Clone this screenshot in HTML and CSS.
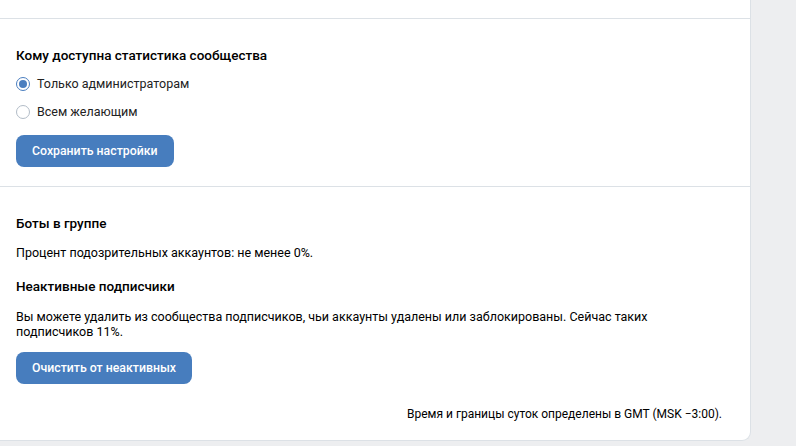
FILE: index.html
```html
<!DOCTYPE html>
<html lang="ru">
<head>
<meta charset="utf-8">
<link rel="stylesheet" href="styles.css">
</head>
<body>
<div class="card">
  <div class="top"></div>
  <section class="section first">
    <h2 class="title">Кому доступна статистика сообщества</h2>
    <div class="radios">
      <label class="radio"><span class="circle checked"></span><span>Только администраторам</span></label>
      <label class="radio"><span class="circle"></span><span>Всем желающим</span></label>
    </div>
    <button class="btn btn-save">Сохранить настройки</button>
  </section>
  <section class="section second">
    <h2 class="title">Боты в группе</h2>
    <p class="text t-bots">Процент подозрительных аккаунтов: не менее 0%.</p>
    <h2 class="title t-inactive">Неактивные подписчики</h2>
    <p class="text para">Вы можете удалить из сообщества подписчиков, чьи аккаунты удалены или заблокированы. Сейчас таких подписчиков 11%.</p>
    <button class="btn btn-clear">Очистить от неактивных</button>
    <p class="text footer">Время и границы суток определены в GMT (MSK −3:00).</p>
  </section>
</div>
</body>
</html>
```
FILE: styles.css
```css
* { box-sizing: border-box; }
html, body { margin: 0; padding: 0; }
body {
  background: #edeef0;
  font-family: Roboto, "Liberation Sans", sans-serif;
  font-size: 12.5px;
  color: #000;
  height: 446px;
  overflow: hidden;
}
.card {
  width: 751px;
  background: #fff;
  border-right: 1px solid #dce1e6;
  border-bottom: 1px solid #dce1e6;
  border-radius: 0 0 9px 0;
}
.top {
  height: 19px;
  border-bottom: 1px solid #dce1e6;
}
.section {
  padding: 26px 28px 19px 16px;
  display: flex;
  flex-direction: column;
  align-items: flex-start;
}
.first { border-bottom: 1px solid #dce1e6; }
.second { padding-bottom: 16px; }
.title {
  margin: 0;
  font-size: 13.5px;
  font-weight: 500;
  line-height: 20px;
  color: #000;
}
.radios {
  margin-top: 9px;
  display: flex;
  flex-direction: column;
  gap: 8px;
}
.radio {
  display: flex;
  align-items: center;
  gap: 7px;
  height: 20px;
  line-height: 20px;
  color: #222;
}
.circle {
  width: 14px;
  height: 14px;
  border-radius: 50%;
  border: 1px solid #b2bcc7;
  display: flex;
  align-items: center;
  justify-content: center;
  flex: none;
}
.circle.checked { border-color: #4a7ebf; }
.circle.checked::after {
  content: "";
  width: 8px;
  height: 8px;
  border-radius: 50%;
  background: #4a7ebf;
}
.btn {
  margin-top: 13px;
  height: 32px;
  padding: 0 16px;
  border: 0;
  border-radius: 8px;
  background: #477dbe;
  color: #fff;
  font-family: Roboto, "Liberation Sans", sans-serif;
  font-size: 12.3px;
  font-weight: 500;
}
.text {
  margin: 0;
  line-height: 20px;
  color: #000;
}
.t-bots { margin-top: 10px; }
.t-inactive { margin-top: 13px; }
.para { margin-top: 13px; line-height: 15px; }
.btn-clear { margin-top: 13px; }
.footer {
  margin-top: 20px;
  align-self: flex-end;
  font-size: 12px;
}
```
